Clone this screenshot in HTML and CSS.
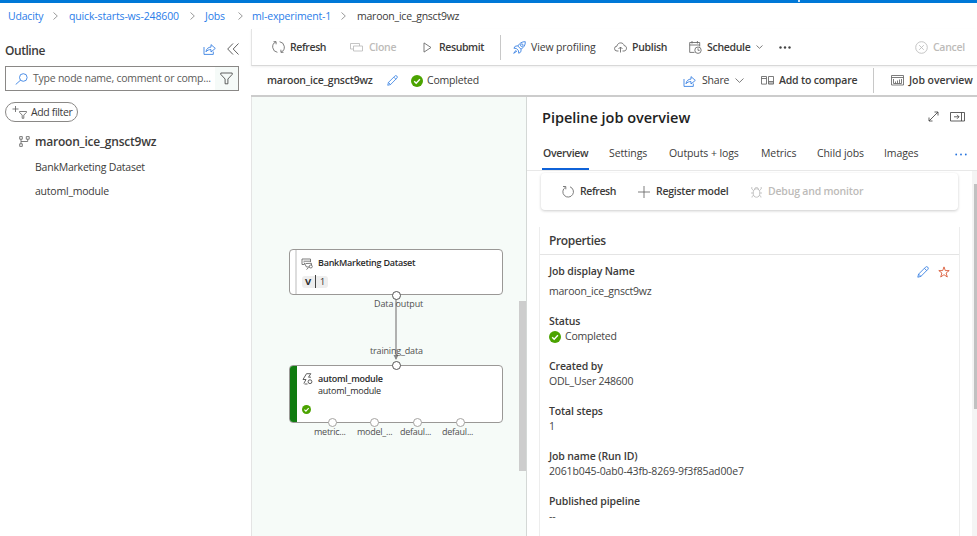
FILE: index.html
```html
<!DOCTYPE html>
<html lang="en">
<head>
<meta charset="utf-8">
<title>maroon_ice_gnsct9wz</title>
<link rel="stylesheet" href="styles.css">
</head>
<body>
<svg class="defs" aria-hidden="true">
  <symbol id="share" viewBox="0 0 13 12"><path d="M1 4v7.4h9.3V8.6M3 8.8C3.4 5.6 5.4 4.2 8 4.1V1.6l4.3 3.8L8 9V6.6C5.9 6.5 4.3 7.2 3 8.8z"/></symbol>
  <symbol id="pencil" viewBox="0 0 12 12"><path d="M.8 11.2l.8-3.1L8.5 1.2a1.5 1.5 0 0 1 2.3 2.2L3.9 10.4zM7.4 2.3l2.3 2.3M1.6 8.1l2.3 2.3"/></symbol>
  <symbol id="check" viewBox="0 0 12 12"><circle cx="6" cy="6" r="6" fill="#4ba300" stroke="none"/><path d="M3.2 6.2l2 2 3.7-3.9" fill="none" stroke="#fff" stroke-width="1.4"/></symbol>
  <symbol id="funnel" viewBox="0 0 13 13"><path d="M.8 1h11.4v1.4L7.9 7v4.8H5.1V7L.8 2.4z"/></symbol>
</svg>
<div class="topbar"><i></i></div>
<nav class="crumbs">
  <a class="c1">Udacity</a><svg class="sep" viewBox="0 0 5 8"><path d="M.5.5L4.300 4 .5 7.500"/></svg>
  <a class="c2">quick-starts-ws-248600</a><svg class="sep s2" viewBox="0 0 5 8"><path d="M.5.5L4.300 4 .5 7.500"/></svg>
  <a class="c3">Jobs</a><svg class="sep s3" viewBox="0 0 5 8"><path d="M.5.5L4.300 4 .5 7.500"/></svg>
  <a class="c4">ml-experiment-1</a><svg class="sep" viewBox="0 0 5 8"><path d="M.5.5L4.300 4 .5 7.500"/></svg>
  <span>maroon_ice_gnsct9wz</span>
</nav>
<div class="body">
  <aside class="outline">
    <header class="outline-head">
      <h2>Outline</h2>
      <svg class="blue" width="13" height="12"><use href="#share"/></svg>
      <svg class="dark" width="12" height="12" viewBox="0 0 12 12"><path d="M6 .5L.7 6 6 11.500M11.500.5L6.200 6l5.300 5.500"/></svg>
    </header>
    <div class="search">
      <svg class="blue" width="13" height="12" viewBox="0 0 13 12"><circle cx="8.300" cy="4.500" r="3.800"/><path d="M5.500 7.200L.7 11.500"/></svg>
      <span>Type node name, comment or comp...</span>
      <i><svg class="dark" width="13" height="13"><use href="#funnel"/></svg></i>
    </div>
    <button class="add-filter">
      <svg width="15" height="13" viewBox="0 0 15 13"><path d="M3.500 0v6M.5 3h6M7.500 5.500h7v.800l-2.700 2.800v3.200h-1.600V9.100L7.500 6.300z"/></svg>
      Add filter
    </button>
    <ul class="tree">
      <li class="root"><svg width="11" height="11" viewBox="0 0 11 11"><path d="M.7.600h2.600v2.600H.7zM7.300.600h2.900v2.600H7.300zM.7 7.800h2.600v2.600H.7zM2 3.200v4.600M2 5.500h6.700V3.200"/></svg>maroon_ice_gnsct9wz</li>
      <li>BankMarketing Dataset</li>
      <li>automl_module</li>
    </ul>
  </aside>
  <main>
    <div class="toolbar">
      <div class="cmd t-refresh"><svg width="13" height="14" viewBox="0 0 13 14"><path d="M3.800 1.900A5.500 5.500 0 0 0 5.400 12.300M9.200 12.100A5.500 5.500 0 0 0 7.600 1.700M1.500 1.700h2.600v2.600M11.500 12.300H8.900V9.700"/></svg><b>Refresh</b></div>
      <div class="cmd t-clone off"><svg width="13" height="9" viewBox="0 0 13 9"><path d="M3.500 6H.5V.5h9V3M3.500 3h9v5h-9z"/></svg><b>Clone</b></div>
      <div class="cmd t-resubmit"><svg width="9" height="11" viewBox="0 0 9 11"><path d="M1 .9l7 4.600-7 4.600z"/></svg><b>Resubmit</b></div>
      <hr>
      <div class="cmd t-view"><svg class="blue" width="13" height="13" viewBox="0 0 13 13"><path d="M12.300.700C9 .500 6.600 2.200 4.800 5L8 8.200c2.900-1.800 4.500-4.200 4.300-7.500zM4.800 5L2.500 5 .9 7.200l2.500.3M8 8.200v2.400l-2.200 1.700-.4-2.600M3.400 7.500l2.100 2.200M3 9.200L.7 12.300l3.200-2.100"/><circle cx="8.800" cy="4.200" r="1.300"/></svg><span>View profiling</span></div>
      <div class="cmd t-publish"><svg width="13" height="11" viewBox="0 0 13 11"><path d="M4.500 9H3A2.400 2.400 0 0 1 2.900 4.200C3.300 1.900 5 .9 6.700.9c1.800 0 3 1 3.400 2.700 1.500.1 2.400 1.200 2.400 2.600C12.500 7.800 11.500 9 10 9H8.500M6.500 10.500V5M4.500 7l2-2 2 2"/></svg><b>Publish</b></div>
      <div class="cmd t-schedule"><svg width="13" height="13" viewBox="0 0 13 13"><path d="M5.500 11.400H.7V1.500h10v4M.7 4h10M3 0v2.500M8.400 0v2.500"/><circle cx="9" cy="9.200" r="3.200"/><path d="M9 7.300v2h1.700"/></svg><b>Schedule</b><svg width="7" height="4" viewBox="0 0 7 4"><path d="M.5.5l3 2.800 3-2.800"/></svg></div>
      <svg class="dots" width="12" height="3" viewBox="0 0 12 3"><circle cx="1.500" cy="1.500" r="1.200"/><circle cx="6" cy="1.500" r="1.200"/><circle cx="10.500" cy="1.500" r="1.200"/></svg>
      <div class="cmd t-cancel off"><svg width="13" height="13" viewBox="0 0 13 13"><circle cx="6.500" cy="6.500" r="5.800"/><path d="M4.200 4.200l4.600 4.600M8.800 4.200L4.200 8.800"/></svg><b>Cancel</b></div>
    </div>
    <div class="subbar">
      <b class="job">maroon_ice_gnsct9wz</b>
      <svg class="blue s-pencil" width="11" height="11"><use href="#pencil"/></svg>
      <svg class="s-check" width="12" height="12"><use href="#check"/></svg>
      <span class="s-done">Completed</span>
      <div class="cmd s-share"><svg class="blue" width="13" height="12"><use href="#share"/></svg><span>Share</span><svg width="9" height="5" viewBox="0 0 9 5"><path d="M.5.5l4 3.900 4-3.900"/></svg></div>
      <div class="cmd s-add"><svg width="13" height="9" viewBox="0 0 13 9"><path d="M.5.5h5v7.600h-5zM.5 2.500h5M7.500.5h5v7.600h-5zM7.500 5.500h5M7.500 7h5"/></svg><b>Add to compare</b></div>
      <hr>
      <div class="cmd s-over"><svg width="13" height="11" viewBox="0 0 13 11"><path d="M.5.5h12v9.500H.5zM.5 2.500h12M2.500 4v4.500h8V4M4.500 8.500V6.500M6.500 8.500V5.500M8.500 8.500V4.500"/></svg><b>Job overview</b></div>
    </div>
    <div class="split">
      <section class="canvas">
        <svg class="edge" width="8" height="66" viewBox="0 0 8 66"><path d="M4 0v62"/><path class="tip" d="M1.500 58h5L4 63z"/></svg>
        <div class="node n1">
          <div class="bar"></div>
          <svg width="12" height="12" viewBox="0 0 12 12"><path d="M1 1h8.500v3M1 1v5.500h2.500M2.500 3.200h7M3 4.500l2.500 4.500h3M4.500 5.500l6-.2v2M5.500 11.500l2-1.800"/><circle cx="9.800" cy="8.500" r="1.500"/></svg>
          <div class="txt"><b>BankMarketing Dataset</b><span class="ver"><b>V</b><em>1</em></span></div>
        </div>
        <div class="node n2">
          <div class="bar"></div>
          <div class="icons"><svg class="dark" width="11" height="12" viewBox="0 0 11 12"><path d="M4.500.700h4.300L6.500 4.200H9M4.500.700L1 6.500h3L1.800 10.500"/><circle cx="8" cy="8.700" r="1.900"/><path d="M2.500 11h3"/></svg><svg width="9" height="9" viewBox="0 0 12 12"><use href="#check"/></svg></div>
          <div class="txt"><b>automl_module</b><span>automl_module</span></div>
        </div>
        <i class="port strong p1"></i><i class="port strong p2"></i>
        <i class="port q1"></i><i class="port q2"></i><i class="port q3"></i><i class="port q4"></i>
        <span class="lbl l1">Data output</span><span class="lbl l2">training_data</span>
        <span class="lbl m1">metric...</span><span class="lbl m2">model_...</span><span class="lbl m3">defaul...</span><span class="lbl m4">defaul...</span>
        <div class="vthumb"></div>
      </section>
      <section class="panel">
        <header class="panel-head">
          <h1>Pipeline job overview</h1>
          <svg class="dark" width="11" height="11" viewBox="0 0 11 11"><path d="M1 10L10 1M6.500 1H10v3.500M1 6.500V10h3.500"/></svg>
          <svg class="dark dock" width="15" height="10" viewBox="0 0 15 10"><path d="M.5.5h14v8.500H.5zM11.500.5v8.500M4 4.800h5M7 2.800l2 2-2 2"/></svg>
        </header>
        <nav class="tabs">
          <a class="on">Overview</a><a class="a2">Settings</a><a class="a3">Outputs + logs</a><a class="a4">Metrics</a><a class="a5">Child jobs</a><a class="a6">Images</a>
          <svg class="dots bluedots" width="12" height="3" viewBox="0 0 12 3"><circle cx="1.200" cy="1.500" r=".9"/><circle cx="6" cy="1.500" r=".9"/><circle cx="10.800" cy="1.500" r=".9"/></svg>
        </nav>
        <div class="scroll">
          <div class="content">
            <div class="actions">
              <div class="cmd p-refresh"><svg width="12" height="13" viewBox="0 0 12 13"><path d="M3.300 2.300A5.300 5.300 0 1 0 8 1.800M1 1.500h2.800v2.800"/></svg><b>Refresh</b></div>
              <div class="cmd p-reg"><svg width="12" height="12" viewBox="0 0 12 12"><path d="M6 0v12M0 6h12"/></svg><b>Register model</b></div>
              <div class="cmd p-debug off"><svg width="11" height="12" viewBox="0 0 11 12"><ellipse cx="5.500" cy="7" rx="3.300" ry="4.200"/><path d="M3.500 3.500a2 2 0 0 1 4 0M2.500 4.500L.8 3V1M8.500 4.500L10.200 3V1M2.200 7H0M8.800 7H11M2.700 9.300L1 10.500v1M8.300 9.300l1.700 1.200v1"/></svg><b>Debug and monitor</b></div>
            </div>
            <div class="props">
              <h3>Properties</h3>
              <dl>
                <div class="first"><dt>Job display Name</dt><dd>maroon_ice_gnsct9wz</dd>
                  <svg class="blue ed" width="12" height="12"><use href="#pencil"/></svg>
                  <svg class="star" width="12" height="12" viewBox="0 0 12 12"><path d="M6 .9l1.300 3.700h3.900L8.100 7l1.200 4L6 8.700 2.700 11l1.200-4L.8 4.600h3.900z"/></svg></div>
                <div><dt>Status</dt><dd class="ok"><svg width="12" height="12"><use href="#check"/></svg>Completed</dd></div>
                <div><dt>Created by</dt><dd>ODL_User 248600</dd></div>
                <div><dt>Total steps</dt><dd>1</dd></div>
                <div><dt>Job name (Run ID)</dt><dd class="id">2061b045-0ab0-43fb-8269-9f3f85ad00e7</dd></div>
                <div><dt>Published pipeline</dt><dd class="id">--</dd></div>
              </dl>
            </div>
          </div>
          <div class="sbar"><i></i></div>
        </div>
      </section>
    </div>
  </main>
</div>
</body>
</html>
```
FILE: styles.css
```css
* { box-sizing: border-box; margin: 0; padding: 0; }
body { width: 977px; height: 536px; overflow: hidden; display: flex; flex-direction: column; background: #fff; color: #3c3b3a; font: 10.5px/15px "Open Sans", "Noto Sans", sans-serif; letter-spacing: -.19px; white-space: nowrap; }
svg { flex: none; fill: none; stroke: #666; stroke-width: .85; }
.defs { position: absolute; width: 0; height: 0; }
b, dt, h1, h2, h3 { font-weight: 600; }
.blue { stroke: #2f7be2; }
.dark { stroke: #444; }
.topbar { height: 3px; background: #0078d7; flex: none; padding-left: 798px; }
.topbar i { display: block; width: 2px; height: 2px; background: #cfe4f7; }
.crumbs { height: 26px; flex: none; display: flex; align-items: center; padding-left: 8px; }
.crumbs a { color: #2b7de9; flex: none; }
.crumbs span { letter-spacing: -.23px; }
.sep { width: 5px; height: 8px; margin-right: 11px; stroke: #888; }
.s2 { margin-right: 10px; } .s3 { margin-right: 9px; }
.c1 { width: 45px; } .c2 { width: 121px; letter-spacing: -.14px; } .c3 { width: 33px; } .c4 { width: 89px; letter-spacing: -.16px; }
.body { flex: 1; display: flex; min-height: 0; }
.outline { width: 251px; padding: 12px 12px 0 5px; flex: none; }
.outline-head { display: flex; align-items: center; height: 18px; }
.outline-head h2 { font-size: 12px; letter-spacing: -.45px; flex: 1; }
.outline-head svg { margin-top: -2px; }
.outline-head svg + svg { margin-left: 11px; }
.search { display: flex; align-items: center; width: 234px; height: 25px; margin-top: 7px; border: 1px solid #8a8886; padding-left: 9px; color: #5c5b5a; }
.search span { margin-left: 5px; flex: 1; letter-spacing: -.24px; }
.search i { width: 23px; height: 23px; background: #f5faf8; display: flex; align-items: center; justify-content: center; }
.add-filter { display: flex; align-items: center; gap: 4px; width: 73px; height: 20px; margin-top: 11px; padding-left: 6px; border: 1px solid #8a8886; border-radius: 10px; background: #fff; font: inherit; color: inherit; letter-spacing: -.35px; }
.tree { list-style: none; margin-top: 8px; }
.tree li { height: 24.500px; padding-left: 30px; line-height: 24.500px; letter-spacing: -.22px; }
.tree .root { display: flex; align-items: center; padding-left: 14px; font-weight: 600; font-size: 12px; }
.root svg { margin-right: 5px; margin-top: -2px; }
main { flex: 1; display: flex; flex-direction: column; min-width: 0; }
.toolbar { height: 37px; flex: none; display: flex; align-items: center; border-left: 1px solid #e4e4e4; border-bottom: 1px solid #d8d8d8; box-shadow: 0 1px 2px #0001; padding-left: 20px; }
.subbar { height: 31px; flex: none; display: flex; align-items: center; border-bottom: 2px solid #ccc; padding-left: 16px; }
hr { width: 1px; height: 25px; border: 0; background: #c8c8c8; flex: none; }
.cmd { display: flex; align-items: center; gap: 5px; flex: none; }
.cmd b { letter-spacing: -.3px; }
.off { color: #bdbbb9; } .off svg { stroke: #bbb; }
.t-refresh { width: 78px; } .t-clone { width: 73px; gap: 6px; } .t-resubmit { width: 77px; gap: 7px; }
.t-view { width: 113px; padding-left: 12px; letter-spacing: -.12px; } .t-publish { width: 75px; } .t-schedule { width: 90px; }
.t-refresh b, .t-resubmit b { letter-spacing: -.4px; }
.dots { fill: #444; stroke: none; }
.t-cancel { margin-left: 124px; }
.job { width: 120px; letter-spacing: -.22px; }
.s-pencil { margin-right: 13px; }
.s-done { margin-left: 4px; width: 256px; }
.s-share { width: 78px; gap: 6px; } .s-add { width: 112px; }
.s-add b { letter-spacing: -.18px; } .s-over b { letter-spacing: -.06px; }
.s-over { padding-left: 17px; }
.split { flex: 1; display: flex; min-height: 0; }
.canvas { position: relative; width: 276px; flex: none; background: #f6fbf8; border-left: 1px solid #e4e4e4; border-right: 1px solid #d4d8d6; overflow: hidden; }
.node { position: absolute; left: 37px; width: 214px; border: 1px solid #9a9896; border-radius: 4px; background: #fff; display: flex; overflow: hidden; font-size: 9px; line-height: 12px; color: #2a2a2a; }
.n1 { top: 152px; height: 46px; } .n2 { top: 268px; height: 58px; }
.bar { width: 7px; border-right: 2px solid #ddd; flex: none; }
.n2 .bar { background: #107c10; border: 0; }
.n1 > svg { margin: 8px 5px 0 4px; }
.n1 .txt { padding-top: 7px; }
.txt > b { letter-spacing: -.25px; }
.txt > b, .txt > span { display: block; }
.ver { margin: 7px 0 0 -16px; width: 26px; height: 12px; background: #eee; border-radius: 3px; padding-left: 3px; }
.ver b { font-weight: 700; font-size: 9.5px; }
.ver em { font-style: normal; border-left: 1px solid #444; margin-left: 4px; padding-left: 4px; }
.icons { width: 21px; padding: 7px 0 0 5px; display: flex; flex-direction: column; gap: 20px; }
.n2 .txt { padding-top: 7px; }
.n2 .txt span { letter-spacing: -.22px; line-height: 11px; }
.port { position: absolute; width: 9px; height: 9px; border: 1px solid #a5a3a1; border-radius: 50%; background: #fff; }
.strong { border-color: #555; }
.p1 { left: 140px; top: 194px; } .p2 { left: 140px; top: 264px; }
.q1 { left: 76px; top: 321px; } .q2 { left: 118px; top: 321px; } .q3 { left: 161px; top: 321px; } .q4 { left: 204px; top: 321px; }
.lbl { position: absolute; font-size: 9px; line-height: 12px; color: #505050; letter-spacing: -.25px; }
.l1 { left: 122px; top: 201px; letter-spacing: -.12px; } .l2 { left: 118px; top: 248px; letter-spacing: -.17px; }
.m1 { left: 62px; top: 329px; } .m2 { left: 105px; top: 329px; } .m3 { left: 148px; top: 329px; } .m4 { left: 190px; top: 329px; }
.edge { position: absolute; left: 140px; top: 200px; stroke: #999; stroke-width: 1.5; }
.tip { fill: #888; stroke: none; }
.vthumb { position: absolute; right: 0; top: 204px; width: 7px; height: 170px; background: #cdcdcd; }
.panel { flex: 1; display: flex; flex-direction: column; min-width: 0; }
.panel-head { height: 41px; display: flex; align-items: center; padding: 0 12px 0 15px; flex: none; }
.panel-head h1 { font-size: 14.5px; letter-spacing: -.02px; flex: 1; color: #222; }
.panel-head svg { margin-top: -2px; }
.dock { margin-left: 11px; }
.tabs { height: 33px; flex: none; display: flex; align-items: center; padding-left: 15px; border-bottom: 1px solid #e8e8e8; }
.tabs a { line-height: 31px; height: 32px; flex: none; letter-spacing: -.1px; }
.tabs .on { width: 47px; padding-left: 1px; border-bottom: 2px solid #0f62d8; font-weight: 600; margin-right: 20px; letter-spacing: -.28px; }
.a2 { width: 60px; } .a3 { width: 92px; } .a4 { width: 56px; } .a5 { width: 67px; } .a6 { width: 71px; }
.bluedots { fill: #2472de; }
.scroll { flex: 1; display: flex; min-height: 0; overflow: hidden; }
.content { flex: 1; padding-left: 12px; }
.actions { width: 417px; height: 37px; margin: 2px 0 0 2px; border-radius: 4px; box-shadow: 0 1px 3px #0003; display: flex; align-items: center; padding-left: 21px; }
.actions .cmd { gap: 6px; }
.p-refresh { width: 76px; } .p-reg { width: 113px; }
.actions .p-debug { gap: 6px; }
.p-debug b { letter-spacing: -.2px; }
.p-reg b { letter-spacing: -.25px; }
.p-refresh b { letter-spacing: -.42px; }
.props { width: 421px; margin-top: 17px; border: 1px solid #ededed; border-top: 0; height: 320px; }
.props h3 { font-size: 12px; height: 28px; line-height: 27px; padding-left: 9px; border-bottom: 1px solid #e4e4e4; letter-spacing: -.36px; }
dl { padding: 9px 0 0 9px; }
dt { letter-spacing: -.13px; }
dd { color: #444; letter-spacing: -.22px; }
dd.id { letter-spacing: -.13px; }
dl > div { height: 45px; position: relative; }
dl > .first { height: 50px; }
.first dd { margin-top: 5px; }
.ok { display: flex; align-items: center; gap: 4px; }
.ed { position: absolute; left: 368px; top: 2px; }
.star { position: absolute; left: 389px; top: 2px; stroke: #d8512d; }
.sbar { width: 5px; background: #f4f4f4; padding: 13px 0 0 2px; }
.sbar i { display: block; height: 225px; background: #c1c1c1; }
```
